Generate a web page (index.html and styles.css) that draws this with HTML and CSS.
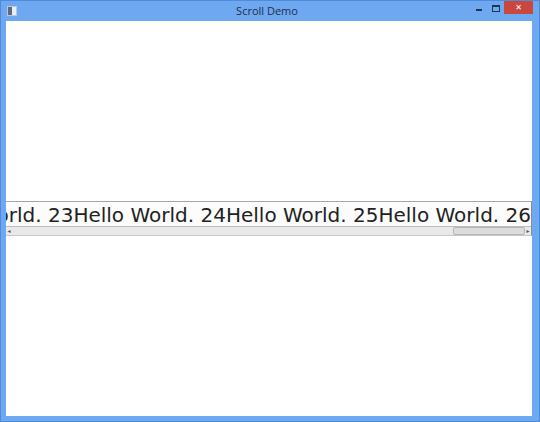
FILE: index.html
```html
<!DOCTYPE html>
<html lang="en">
<head>
    <meta charset="UTF-8">
    <title>Scroll Demo</title>
    <link rel="stylesheet" href="styles.css">
</head>
<body>
    <div class="window">
        <div class="titlebar">
            <div class="side">
                <div class="app-icon"><span></span></div>
            </div>
            <div class="title">Scroll Demo</div>
            <div class="side caption-buttons">
                <div class="btn-min"><span></span></div>
                <div class="btn-max"><span></span></div>
                <div class="btn-close">&#x2715;</div>
            </div>
        </div>

        <div class="client">
            <div class="scroll-pane">
                <div class="viewport">
                    <span class="line" id="line"></span>
                </div>
                <div class="hbar">
                    <div class="arrow left">&#9666;</div>
                    <div class="track">
                        <div class="thumb"></div>
                    </div>
                    <div class="arrow right">&#9656;</div>
                </div>
            </div>
        </div>
    </div>

    <script>
        // fill the label with "Hello World. 0" .. "Hello World. 26"
        let text = '';
        for (let i = 0; i <= 26; i++) {
            text += 'Hello World. ' + i;
        }
        document.getElementById('line').textContent = text;
    </script>
</body>
</html>
```

FILE: styles.css
```css
body {
    margin: 0;
    padding: 0;
    overflow: hidden;
}

.window {
    width: 540px;
    height: 422px;
    box-sizing: border-box;
    background: #6ea8f0;
    border: 1px solid #4f8bdb;
    display: flex;
    flex-direction: column;
}

.titlebar {
    height: 20px;
    display: flex;
    align-items: flex-start;
}

.side {
    flex: 1 1 0;
    display: flex;
}

.app-icon {
    width: 8px;
    height: 8px;
    margin: 5px 0 0 6px;
    background: #e8eef6;
    border: 1px solid #b8c8dc;
    display: flex;
}

.app-icon span {
    width: 4px;
    background: #5d6b7c;
}

.title {
    font-family: "Open Sans", "Liberation Sans", sans-serif;
    font-size: 11px;
    line-height: 19px;
    color: #1e2f4c;
}

.caption-buttons {
    justify-content: flex-end;
    padding-right: 6px;
}

.btn-min,
.btn-max {
    width: 17px;
    height: 14px;
    display: flex;
    justify-content: center;
}

.btn-min span {
    width: 6px;
    height: 2px;
    margin-top: 8px;
    background: #1d3454;
}

.btn-max span {
    width: 6px;
    height: 4px;
    margin-top: 4px;
    border: 1px solid #1d3454;
    border-top-width: 2px;
}

.btn-close {
    width: 29px;
    height: 13px;
    background: #c9473d;
    color: #fff;
    font-family: "DejaVu Sans", sans-serif;
    font-size: 8px;
    font-weight: bold;
    line-height: 13px;
    text-align: center;
}

.client {
    flex: 1;
    margin: 0 7px 5px 5px;
    background: #fff;
    display: flex;
    flex-direction: column;
    justify-content: center;
}

.scroll-pane {
    border-top: 1px solid #a6a6a6;
    border-bottom: 1px solid #c8c8c8;
    border-right: 1px solid #8d8d8d;
    background: #fcfcfc;
}

/* label wider than the pane, scrolled all the way to the right */
.viewport {
    display: flex;
    justify-content: flex-end;
    overflow: hidden;
    white-space: nowrap;
    height: 24px;
}

.line {
    flex-shrink: 0;
    font-family: "DejaVu Sans", sans-serif;
    font-size: 20px;
    line-height: 24px;
    padding-top: 1px;
    color: #222;
}

.hbar {
    height: 8px;
    display: flex;
    background: #e9e9e9;
    border-top: 1px solid #bdbdbd;
}

.arrow {
    width: 6px;
    font-size: 6px;
    line-height: 8px;
    color: #555;
    text-align: center;
    font-family: "DejaVu Sans", sans-serif;
}

.track {
    flex: 1;
    display: flex;
    justify-content: flex-end;
}

.thumb {
    width: 72px;
    box-sizing: border-box;
    background: #dcdcdc;
    border: 1px solid #b5b5b5;
    border-radius: 2px;
}
```
